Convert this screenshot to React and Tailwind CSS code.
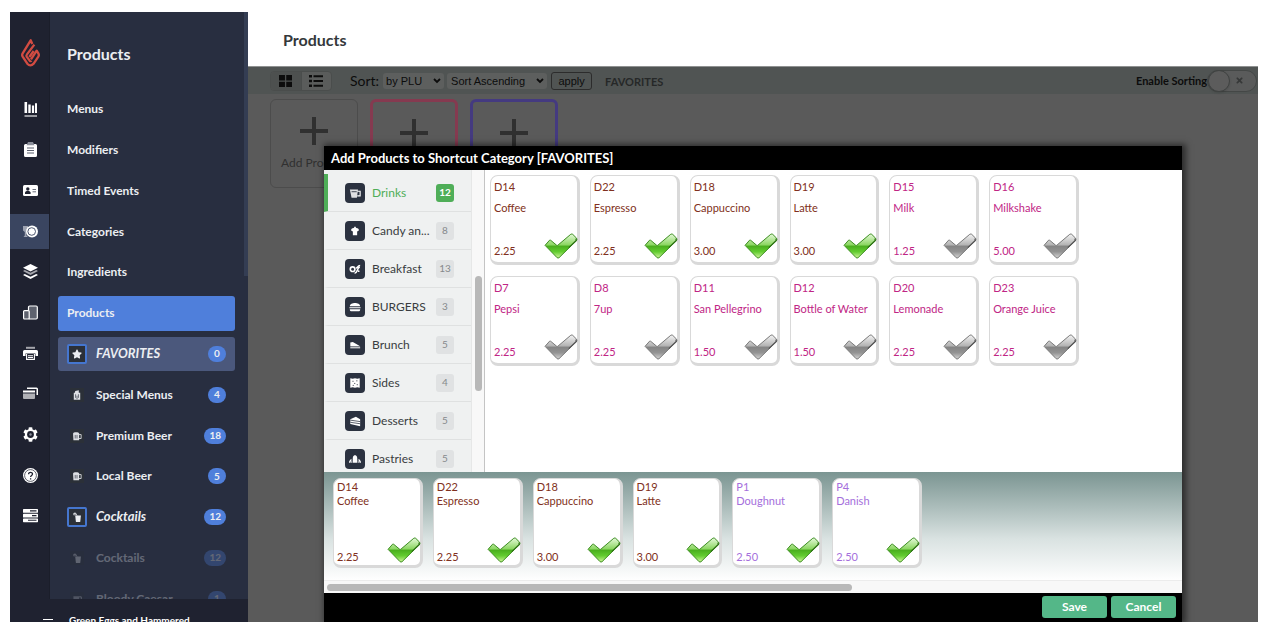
import { useId, useState } from "react"
import { FaStar, FaCog, FaTimes } from "react-icons/fa"

const menuLinks = ["Menus", "Modifiers", "Timed Events", "Categories", "Ingredients"]

const shortcuts = [
  { name: "FAVORITES", count: 0, icon: "star", custom: true, active: true },
  { name: "Special Menus", count: 4, icon: "carton" },
  { name: "Premium Beer", count: 18, icon: "beer" },
  { name: "Local Beer", count: 5, icon: "beer" },
  { name: "Cocktails", count: 12, icon: "drink", custom: true },
  { name: "Cocktails", count: 12, icon: "drink", dim: true },
  { name: "Bloody Caesar", count: 1, icon: "cup", dim: true },
]

const categories = [
  { name: "Drinks", count: 12, icon: "cups" },
  { name: "Candy an...", count: 8, icon: "cupcake" },
  { name: "Breakfast", count: 13, icon: "eggs" },
  { name: "BURGERS", count: 3, icon: "burger" },
  { name: "Brunch", count: 5, icon: "slice" },
  { name: "Sides", count: 4, icon: "cracker" },
  { name: "Desserts", count: 5, icon: "cake" },
  { name: "Pastries", count: 5, icon: "croissant" },
]

const products = [
  { plu: "D14", name: "Coffee", price: "2.25", color: "text-[#803020]", picked: true },
  { plu: "D22", name: "Espresso", price: "2.25", color: "text-[#803020]", picked: true },
  { plu: "D18", name: "Cappuccino", price: "3.00", color: "text-[#803020]", picked: true },
  { plu: "D19", name: "Latte", price: "3.00", color: "text-[#803020]", picked: true },
  { plu: "D15", name: "Milk", price: "1.25", color: "text-[#c02585]" },
  { plu: "D16", name: "Milkshake", price: "5.00", color: "text-[#c02585]" },
  { plu: "D7", name: "Pepsi", price: "2.25", color: "text-[#c02585]" },
  { plu: "D8", name: "7up", price: "2.25", color: "text-[#c02585]" },
  { plu: "D11", name: "San Pellegrino", price: "1.50", color: "text-[#c02585]" },
  { plu: "D12", name: "Bottle of Water", price: "1.50", color: "text-[#c02585]" },
  { plu: "D20", name: "Lemonade", price: "2.25", color: "text-[#c02585]" },
  { plu: "D23", name: "Orange Juice", price: "2.25", color: "text-[#c02585]" },
]

const selected = [
  ...products.slice(0, 4),
  { plu: "P1", name: "Doughnut", price: "2.50", color: "text-[#a56fdc]", picked: true },
  { plu: "P4", name: "Danish", price: "2.50", color: "text-[#a56fdc]", picked: true },
]

const railIcons = {
  Reports: (
    <>
      <path d="M1.5 0h2.6v11H1.5zM5.3 2.6h2.4V11H5.3zM8.9 3.4h2.2V11H8.9zM12 1.2h2V11h-2z" />
      <path d="M1.5 13h12.5v2H1.5z" opacity=".55" />
    </>
  ),
  Orders: (
    <>
      <path d="M2.5 2h10a1.5 1.5 0 0 1 1.5 1.5v10a1.5 1.5 0 0 1-1.5 1.5h-10A1.5 1.5 0 0 1 1 13.500v-10A1.500 1.500 0 0 1 2.500 2z" />
      <path d="M5 0h5l1.500 3.200h-8z" fill="#8b8f9a" />
      <path d="M4 6h7M4 8.500h7M4 11h7" stroke="#5b606e" strokeWidth="1" />
    </>
  ),
  Customers: (
    <>
      <rect x="0" y="2" width="15" height="11" rx="1.500" />
      <circle cx="4.800" cy="6" r="1.700" fill="#1f2230" />
      <path d="M2 11V9.500c0-1 1-1.600 2.800-1.600s2.800.6 2.800 1.600V11z" fill="#1f2230" />
      <path d="M9.500 6.500H13M9.500 8.800H13" stroke="#6c707c" strokeWidth="1" />
    </>
  ),
  Products: (
    <>
      <path d="M0 2h5v4.500L3.400 8v3.500L5 13H.5L1.800 11.500V8L0 6.500z" opacity=".5" />
      <circle cx="9" cy="7.500" r="6" />
      <circle cx="8.700" cy="7.500" r="3.800" fill="none" stroke="#3b4560" strokeWidth=".9" />
    </>
  ),
  Inventory: (
    <>
      <path d="M7.500 0L15 3.800 7.500 7.600 0 3.800z" />
      <path d="M0 7l1.800-1 5.700 2.800L13.200 6 15 7l-7.500 4z" opacity=".6" />
      <path d="M0 11l1.800-1 5.700 2.800L13.200 10 15 11l-7.500 4z" />
    </>
  ),
  Devices: (
    <>
      <rect x="5.500" y="1" width="8.800" height="13" rx="1.200" fill="#5e626e" stroke="#fff" strokeWidth="1.200" />
      <rect x=".6" y="5.600" width="5.600" height="8.400" rx="1" fill="#5e626e" stroke="#fff" strokeWidth="1.200" />
    </>
  ),
  Printers: (
    <>
      <path d="M3 .8h9v2H3z" opacity=".6" />
      <path d="M1.500 4h12A1.500 1.500 0 0 1 15 5.500V10h-2.500V7.500h-10V10H0V5.500A1.500 1.500 0 0 1 1.500 4z" />
      <path d="M3.600 8v5.400h7.800V8M5 9.800h5M5 11.500h5" fill="none" stroke="#fff" strokeWidth="1.100" />
    </>
  ),
  Payments: (
    <>
      <path d="M4 1.500h9.500A1.500 1.500 0 0 1 15 3v6h-1.500V3H4z" />
      <path d="M0 4.500h12v2H0z" />
      <path d="M0 7.500h12V12a1 1 0 0 1-1 1H1a1 1 0 0 1-1-1z" opacity=".65" />
    </>
  ),
  Settings: (
    <>
      <FaCog size={15} />
      <circle cx="7.500" cy="7.500" r="3.400" fill="#1f2230" />
      <circle cx="7.500" cy="7.500" r="1.200" fill="#8b8f9a" />
    </>
  ),
  Help: (
    <>
      <circle cx="7.500" cy="7.500" r="7.500" />
      <circle cx="7.500" cy="7.500" r="5.900" fill="none" stroke="#1f2230" strokeWidth=".7" />
      <path d="M5.600 6.200c0-2.600 3.900-2.400 3.900-.2 0 1.400-1.900 1.500-1.900 3M7.600 10.200v1.400" fill="none" stroke="#1f2230" strokeWidth="1.300" />
    </>
  ),
  Backend: (
    <>
      <rect x="0" y="1" width="15" height="3.800" rx=".6" />
      <rect x="0" y="5.700" width="15" height="3.800" rx=".6" />
      <rect x="0" y="10.400" width="15" height="3.800" rx=".6" />
      <path d="M7 2.900h6.500M9 7.600h4.500M5 12.300h8.500" stroke="#1f2230" strokeWidth="1.100" />
    </>
  ),
}

const glyphs = {
  carton: (
    <>
      <path d="M2.500 4h9v9.500h-9zM4.500 1.500l5-1V4H4z" />
      <path d="M5 6v5M9 6v5M7 8v5" stroke="#2b3038" strokeWidth=".9" />
    </>
  ),
  beer: (
    <>
      <path d="M1.500 3.500C1.500 1 10 1 10 3.500V13H2z" />
      <path d="M9.500 5h3.300v5.500H9.500" fill="none" stroke="currentColor" strokeWidth="1.200" />
      <path d="M4.500 5.500v5M7 5.500v5" stroke="#2b3038" strokeWidth=".9" />
    </>
  ),
  drink: (
    <>
      <path d="M4.500 5h8l-1 9h-6z" />
      <path d="M7 5L5 1.500 2.500 2" fill="none" stroke="currentColor" strokeWidth="1.200" />
      <circle cx="3.500" cy="3" r="2" opacity=".6" />
    </>
  ),
  cup: (
    <>
      <path d="M2 3h8v6l-1 1H3L2 9z" opacity=".7" />
      <path d="M10 4h3v4h-3M1 12h11" fill="none" stroke="currentColor" strokeWidth="1.200" />
    </>
  ),
  cups: (
    <>
      <path d="M1 3h9.500l-1.300 9.500H3z" opacity=".85" />
      <path d="M10 5h3v5.300H9.600" fill="none" stroke="currentColor" strokeWidth="1.300" />
      <path d="M3 5.500h6" stroke="#2b3240" strokeWidth="1" />
    </>
  ),
  cupcake: <path d="M7 1.500l1.500 2c2 0 3.500 1.500 3 3L9.500 7.500V12h-5V7.500l-2-1c-.5-1.500 1-3 3-3z" />,
  eggs: (
    <>
      <circle cx="4.200" cy="7.200" r="2.700" fill="none" stroke="currentColor" strokeWidth="1.900" />
      <path d="M6.500 12c4-.5 2-5 6-7.500M8 5.800c2 .3 1.500-2.800 5-2.800" fill="none" stroke="currentColor" strokeWidth="1.700" />
      <circle cx="11.200" cy="9.500" r="1.100" />
    </>
  ),
  burger: <path d="M1 6.200c0-5 12-5 12 0zM.5 7.300h13v1.200H.5zM1 9.600h12v.9c0 1-1 1.500-2 1.500H3c-1 0-2-.5-2-1.500z" />,
  slice: (
    <>
      <path d="M1.500 4l3-.5 8.500 5H1.500z" />
      <path d="M1.500 9h11.500v2H1.500z" opacity=".7" />
    </>
  ),
  cracker: (
    <>
      <path d="M1.500 1.500l2.800.6L7 1.500l2.700.6 2.800-.6v11l-2.800-.6-2.700.6-2.700-.6-2.800.6z" />
      <path d="M4 5h1.300M8.500 4.500h1.300M6 7.500h1.300M9 9h1.300M4.300 9.800h1.300" stroke="#2b3240" strokeWidth="1" />
    </>
  ),
  cake: (
    <>
      <path d="M1.500 5L8 2l5 3v8L1.500 10.500z" />
      <path d="M1.500 6l11.500 1.700M1.500 8.500L13 10.200" stroke="#2b3240" strokeWidth=".9" />
    </>
  ),
  croissant: <path d="M4.700 11.500L4.500 5c1-3 4-3 5 0l-.2 6.500zM3.600 5.500L4 11.500H2.600zM2.800 7L1.800 11.500H0C0 9.500 1.200 7.500 2.800 7zM10.400 5.500L10 11.500h1.400zM11.200 7l1 4.500H14c0-2-1.200-4-2.800-4.500z" />,
}

function Glyph({ name, className }) {
  if (name === "star") return <FaStar className={className} aria-hidden="true" />
  return (
    <svg viewBox="0 0 14 14" fill="currentColor" className={className} aria-hidden="true">
      {glyphs[name]}
    </svg>
  )
}

function Flame() {
  return (
    <svg viewBox="0 0 57 84" className="h-7 w-[19px]" fill="none" stroke="#d24c42" strokeWidth="7" strokeLinejoin="round" aria-hidden="true">
      <path d="M34 15L29 4 5 43q-3 5 0 10l14 21q9 10 19 0l14-21q3-5 0-10l-5-8-17 26" />
      <path d="M40 17L18 46q-3 4-1 7l9 12q3 3 5 0" />
      <path d="M38 36L25 54" />
    </svg>
  )
}

function Check({ picked, className }) {
  const id = useId()
  return (
    <svg viewBox="0 0 104 80" className={`absolute -right-px h-[26px] w-[34px] ${className}`} aria-hidden="true">
      <defs>
        <linearGradient id={id} x1="0" y1="0" x2="0" y2="1">
          <stop offset="0" stopColor={picked ? "#e4f9d8" : "#f4f4f4"} />
          <stop offset="0.44" stopColor={picked ? "#8ed765" : "#b5b5b5"} />
          <stop offset="0.52" stopColor={picked ? "#4bb01f" : "#858585"} />
          <stop offset="0.74" stopColor={picked ? "#62cc30" : "#939393"} />
          <stop offset="1" stopColor={picked ? "#d0f59c" : "#d4d4d4"} />
        </linearGradient>
      </defs>
      <path
        d="M3 38L17 22q2-1 4 1l18 15q2 1 4-1L82 4q4-2 6 0l12 12q2 4 0 7L46 76q-3 2-6 0z"
        fill={`url(#${id})`}
        stroke={picked ? "#388a1c" : "#757575"}
        strokeWidth="3"
        strokeLinejoin="round"
      />
      <path d="M76 45l23-22-1-6" fill="none" stroke={picked ? "#2f7316" : "#555555"} strokeWidth="4" />
    </svg>
  )
}

function ProductCard({ product, compact }) {
  return (
    <button
      type="button"
      aria-pressed={!!product.picked}
      className={`relative flex h-[90px] flex-col rounded-lg border border-r-[3px] border-b-[3px] border-[#d9d9d9] bg-white pl-[3px] text-left text-[11px] leading-[14px] ${product.color} ${compact ? "pt-px" : "pt-1"}`}
    >
      <span>{product.plu}</span>
      <span className={`whitespace-nowrap ${compact ? "" : "mt-[7px]"}`}>{product.name}</span>
      <span className={`mt-auto ${compact ? "mb-px" : "mb-1"}`}>{product.price}</span>
      <Check picked={product.picked} className={compact ? "bottom-[2px]" : "bottom-[3px]"} />
    </button>
  )
}

function Sidebar() {
  return (
    <aside className="flex w-[238px] shrink-0 flex-col bg-[#282e40] text-white">
      <div className="flex min-h-0 flex-1">
        <nav aria-label="Main" className="w-10 shrink-0 border-r border-[#1b1e2a] bg-[#1f2230]">
          <a href="#home" aria-label="Home" className="flex h-[77px] items-center justify-center pt-1 pl-[2px]">
            <Flame />
          </a>
          <div className="grid h-[447px] auto-rows-fr">
            {Object.entries(railIcons).map(([label, icon]) => (
              <a
                key={label}
                href={`#${label.toLowerCase()}`}
                aria-label={label}
                className={`flex items-center justify-center pl-px ${label === "Products" ? "my-[3px] bg-[#3a4560]" : ""}`}
              >
                <svg viewBox="0 0 15 15" className="size-[15px]" fill="#fff" aria-hidden="true">
                  {icon}
                </svg>
              </a>
            ))}
          </div>
        </nav>

        <div className="relative min-w-0 flex-1 overflow-hidden pr-[13px] pl-2">
          <div className="absolute top-0 right-0 h-[264px] w-1 bg-[#343d53]"></div>
          <h2 className="flex h-[77px] items-center pt-[7px] pl-[9px] text-base font-bold text-[#eceef2]">Products</h2>
          <nav aria-label="Products" className="grid h-[530px] auto-rows-fr text-xs font-bold text-[#eceef2]">
            {menuLinks.map((name) => (
              <a key={name} href="#menu" className="my-[3px] flex items-center pl-[9px]">
                {name}
              </a>
            ))}
            <a href="#products" className="my-[3px] flex items-center rounded-[3px] bg-[#4f7fdb] pl-[9px]">
              Products
            </a>
            {shortcuts.map((item, index) => (
              <a
                key={index}
                href="#shortcut"
                className={`my-[3px] flex items-center rounded-[3px] pr-[9px] pl-[9px] ${item.active ? "bg-[#4b587c]" : ""} ${item.dim ? "opacity-30" : ""}`}
              >
                <span
                  className={`flex size-5 items-center justify-center rounded-[2px] ${item.custom ? "border-2 border-[#4576cf] bg-[#2b3038]" : ""}`}
                >
                  <Glyph name={item.icon} className={item.custom ? "size-[10px]" : "size-[14px] bg-[#2b3038] p-[2px] text-[#dfe1e4]"} />
                </span>
                <span className={`ml-[9px] ${item.custom ? "text-[13px] italic" : ""}`}>{item.name}</span>
                <span className="ml-auto flex h-4 min-w-[18px] items-center justify-center rounded-full bg-[#4f7fdb] px-[5px] text-[10px]">
                  {item.count}
                </span>
              </a>
            ))}
          </nav>
        </div>
      </div>
      <div className="flex h-[23px] shrink-0 overflow-hidden bg-[#1f2230] pt-3 pl-[33px] text-[10px] leading-[18px] font-bold whitespace-nowrap">
        <span className="mt-2 mr-4 h-px w-[10px] bg-white"></span>
        Green Eggs and Hammered
      </div>
    </aside>
  )
}

function Toolbar() {
  return (
    <div className="flex h-[27px] shrink-0 items-center bg-[#505453] pl-[22px] text-[#0c0c0c]">
      <div className="flex h-5 w-[62px] overflow-hidden rounded border border-[#4a4d4c] bg-[#5a5c5b]">
        <button type="button" aria-label="Grid view" className="flex flex-1 items-center justify-center border-r border-[#4a4d4c] bg-[#4d504f]">
          <svg viewBox="0 0 12 12" className="h-3 w-[13px]" fill="currentColor" preserveAspectRatio="none">
            <path d="M0 0h5.500v5.500H0zM6.700 0H12v5.500H6.700zM0 6.700h5.500V12H0zM6.700 6.700H12V12H6.700z" />
          </svg>
        </button>
        <button type="button" aria-label="List view" className="flex flex-1 items-center justify-center">
          <svg viewBox="0 0 14 12" className="h-3 w-[14px]" fill="currentColor">
            <path d="M0 0h3v2.500H0zM0 4.700h3v2.500H0zM0 9.500h3V12H0zM4.500.2H14v2H4.500zM4.500 5H14v2H4.500zM4.500 9.700H14v2H4.500z" />
          </svg>
        </button>
      </div>
      <label htmlFor="sort-field" className="ml-[18px] text-sm">
        Sort:
      </label>
      <div className="relative ml-1">
        <select id="sort-field" className="block h-4 w-[61px] appearance-none rounded-[3px] bg-[#5d5f5e] pl-[3px] font-['Liberation_Sans',sans-serif] text-[11px] leading-4">
          <option>by PLU</option>
          <option>by Name</option>
        </select>
        <Chevron />
      </div>
      <div className="relative ml-[3px]">
        <select aria-label="Sort direction" className="block h-4 w-[100px] appearance-none rounded-[3px] bg-[#5d5f5e] pl-[4px] font-['Liberation_Sans',sans-serif] text-[11px] leading-4">
          <option>Sort Ascending</option>
          <option>Sort Descending</option>
        </select>
        <Chevron />
      </div>
      <button type="button" className="ml-1 h-[18px] w-[41px] rounded-[3px] border border-[#2c2c2c] font-['Liberation_Sans',sans-serif] text-[11px] leading-4">
        apply
      </button>
      <span className="ml-[13px] pt-[3px] text-[11px] font-bold text-[#262828]">FAVORITES</span>
      <span id="enable-sorting" className="ml-auto pt-px text-[11px] font-bold">
        Enable Sorting
      </span>
      <button
        type="button"
        role="switch"
        aria-checked="false"
        aria-labelledby="enable-sorting"
        className="mr-px flex h-[22px] w-[50px] items-center justify-between rounded-full border border-[#444746] bg-[#5a5b5b] pr-3"
      >
        <span className="size-[22px] rounded-full border border-[#3f4241] bg-[#5c5c5c] shadow"></span>
        <FaTimes size={9} className="text-[#363838]" />
      </button>
    </div>
  )
}

function Chevron() {
  return (
    <svg viewBox="0 0 8 6" className="pointer-events-none absolute top-[5px] right-[3px] h-[6px] w-2" fill="none" stroke="#0c0c0c" strokeWidth="1.800">
      <path d="M1 1l3 3 3-3" />
    </svg>
  )
}

function AddDialog() {
  const [category, setCategory] = useState("Drinks")

  return (
    <section
      role="dialog"
      aria-label="Add Products to Shortcut Category"
      className="absolute top-[134px] right-[76px] bottom-0 left-[76px] flex flex-col bg-black shadow-[2px_0_6px_2px_rgba(0,0,0,0.5)]"
    >
      <h2 className="h-6 shrink-0 pl-[7px] text-[13px] leading-6 font-bold text-white">Add Products to Shortcut Category [FAVORITES]</h2>

      <div className="flex min-h-0 flex-1 bg-white">
        <div className="relative flex w-[161px] shrink-0 overflow-hidden border-r border-[#c4c4c4] bg-[#f8f8f8]">
          <ul className="w-[148px] border-r border-[#e6e7e7] bg-[#eff1f1] pt-1">
            {categories.map((item) => {
              const active = item.name === category
              return (
                <li key={item.name}>
                  <button
                    type="button"
                    onClick={() => setCategory(item.name)}
                    className={`flex h-[38px] w-full items-center border-b border-l-4 border-b-[#dfe1e1] pr-[17px] pl-[17px] text-left text-xs ${active ? "border-l-[#4fae58] text-[#4fae58]" : "border-l-transparent text-[#393c40]"}`}
                  >
                    <span className="flex size-5 shrink-0 items-center justify-center rounded bg-[#2b3240] text-white">
                      <Glyph name={item.icon} className="size-3" />
                    </span>
                    <span className="ml-[7px] whitespace-nowrap">{item.name}</span>
                    <span
                      className={`ml-auto flex size-[18px] shrink-0 items-center justify-center rounded-[3px] text-[10px] ${active ? "bg-[#4fae58] font-bold text-white" : "bg-[#e0e2e3] text-[#85898c]"}`}
                    >
                      {item.count}
                    </span>
                  </button>
                </li>
              )
            })}
          </ul>
          <div className="absolute top-[106px] right-[2px] h-[115px] w-[7px] rounded-full bg-[#b8b8b8]"></div>
        </div>
        <div className="grid w-[600px] grid-cols-6 content-start gap-x-[10px] gap-y-[11px] pt-[5px] pr-[6px] pl-[5px]">
          {products.map((product) => (
            <ProductCard key={product.plu} product={product} />
          ))}
        </div>
      </div>

      <div className="shrink-0 bg-linear-to-b from-[#7b9592] via-[#d9e2e1] via-55% to-white to-90%">
        <div className="grid h-[108px] w-[608px] grid-cols-6 content-start gap-[10px] pt-[6px] pr-[10px] pl-[9px]">
          {selected.map((product) => (
            <ProductCard key={product.plu} product={product} compact />
          ))}
        </div>
        <div className="flex h-[13px] items-center border-t border-[#ececec] bg-[#f8f8f8] px-[3px]">
          <div className="h-[7px] w-[525px] rounded-full bg-[#b8b8b8]"></div>
        </div>
      </div>

      <div className="flex shrink-0 justify-end gap-1 pt-[3px] pr-[6px] pb-1 text-xs font-bold text-white">
        <button type="button" className="h-[22px] w-[65px] rounded-[3px] bg-[#54b788]">
          Save
        </button>
        <button type="button" className="h-[22px] w-[65px] rounded-[3px] bg-[#54b788]">
          Cancel
        </button>
      </div>
    </section>
  )
}

export default function App() {
  return (
    <div className="h-screen bg-white py-3 pr-[14px] pl-[10px] font-[Lato,sans-serif]">
      <div className="flex h-full overflow-hidden">
        <Sidebar />
        <main className="relative flex min-w-0 flex-1 flex-col overflow-hidden bg-[#5a5a5a]">
          <header className="flex h-[55px] shrink-0 items-center border-b border-[#8f9191] bg-white pt-[2px] pl-[35px]">
            <h1 className="text-base font-bold text-[#34383b]">Products</h1>
          </header>
          <Toolbar />
          <div className="flex gap-3 pt-[5px] pl-[22px] text-[#303030]">
            {["border border-[#4c4c4c]", "border-[3px] border-[#853a50]", "border-[3px] border-[#443a80]"].map((border, index) => (
              <button key={index} type="button" className={`flex h-[89px] w-[88px] flex-col items-center rounded-md pt-[17px] text-xs ${border}`}>
                <svg viewBox="0 0 28 28" className="size-7 shrink-0" fill="none" stroke="currentColor" strokeWidth="4" aria-hidden="true">
                  <path d="M14 0v28M0 14h28" />
                </svg>
                {index === 0 && <span className="mt-[10px] whitespace-nowrap">Add Product</span>}
              </button>
            ))}
          </div>
          <AddDialog />
        </main>
      </div>
    </div>
  )
}
